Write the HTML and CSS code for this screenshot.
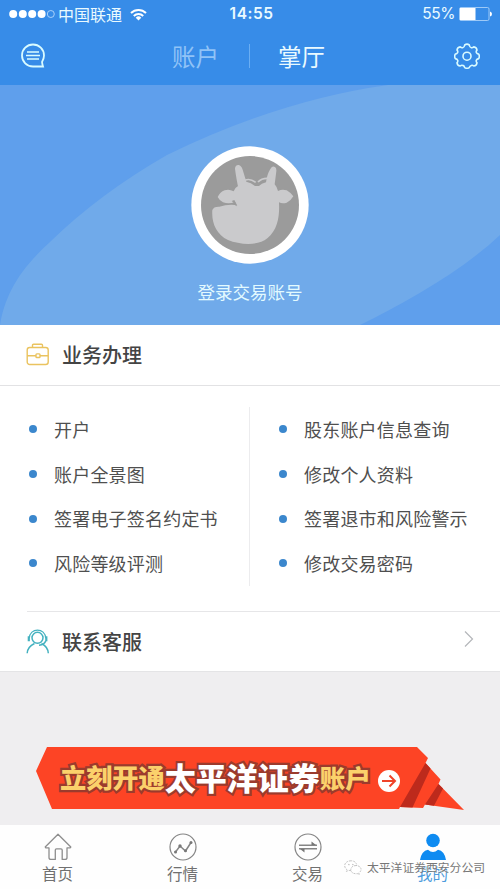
FILE: index.html
```html
<!DOCTYPE html>
<html lang="zh-CN">
<head>
<meta charset="utf-8">
<meta name="viewport" content="width=device-width, initial-scale=1">
<title>掌厅</title>
<link rel="stylesheet" href="styles.css">
</head>
<body>
<div class="app">
  <header class="top">
    <div class="status">
      <div class="carrier">
        <svg width="46" height="10" viewBox="0 0 46 10" fill="#fff"><circle cx="4.2" cy="5" r="4"/><circle cx="13.8" cy="5" r="4"/><circle cx="23.2" cy="5" r="4"/><circle cx="32.6" cy="5" r="4"/><circle cx="41.8" cy="5" r="3.5" fill="none" stroke="#b5d8fb" stroke-width=".9"/></svg>
        <span class="carrier-name">中国联通</span>
        <svg width="17" height="13" viewBox="0 0 17 13" fill="none" stroke="#fff" stroke-width="2"><path d="M1 5a10.6 10.6 0 0 1 15 0M3.800 8a6.600 6.600 0 0 1 9.400 0"/><path d="M8.500 12.500 5.700 9.700a4 4 0 0 1 5.600 0z" fill="#fff" stroke="none"/></svg>
      </div>
      <div class="clock">14:55</div>
      <div class="power">
        <span>55%</span>
        <svg width="33" height="14" viewBox="0 0 33 14"><rect x=".5" y=".5" width="29.500" height="13" rx="1.500" fill="none" stroke="#a9d0f8" stroke-width=".9"/><rect x="1" y="1" width="15.500" height="12" fill="#fff"/><path d="M31 4.500q2 .5 2 2.500t-2 2.500z" fill="#fff"/></svg>
      </div>
    </div>
    <nav class="nav">
      <svg class="chat" width="26" height="26" viewBox="0 0 26 26" fill="none" stroke="#d9fbff"><path d="M23 23.500H13A11 11 0 1 1 24 12.500c0 3-1 4.600-2 6.400q.3 2.600 1 4.600z" stroke-width="1.800"/><path d="M7 9h12M6 12.500h14M7 16h12" stroke-width="1.300"/></svg>
      <div class="switch"><span class="off">账户</span><i></i><span>掌厅</span></div>
      <svg class="gear" width="26" height="26" viewBox="0 0 26 26" fill="none" stroke="#d9fbff" stroke-width="1.600" stroke-linejoin="round"><path d="M10.700 2Q13 .2 15.300 2q.3 2.300 2 2.700 1.300.3 2.500-.8 2.900.4 3.200 3.200-1.200 1.300-.6 2.500.6 1.200 2.300 1.500 1.300 2.200 0 4.500-1.900.4-2.400 1.700-.4 1.200.7 2.500-.4 2.900-3.200 3.200-1.300-1.100-2.500-.6-1.500.5-2 2.200-2.300 1.400-4.600 0-.3-1.800-1.900-2.200-1.300-.5-2.600.6-2.800-.3-3.200-3.200 1.100-1.300.7-2.500-.5-1.300-2.400-1.700-1.300-2.300 0-4.500 1.700-.3 2.300-1.500.6-1.200-.6-2.500.3-2.800 3.200-3.200 1.200 1.100 2.500.8 1.700-.4 2-2.700z"/><circle cx="13" cy="13.200" r="4"/></svg>
    </nav>
  </header>

  <section class="hero">
    <svg class="hero-bg" width="500" height="240" viewBox="0 0 500 240"><path d="M0 240C5 211 18 186 50 157Q99 109 167 70Q280 15 388 0H500V150C462 186 405 218 360 240z" fill="#70aaea"/></svg>
    <svg class="avatar" width="118" height="118" viewBox="63 48 354 354">
      <circle cx="240" cy="225" r="176" fill="#fff"/><circle cx="240" cy="225" r="147" fill="#9b9b9b"/>
      <path fill="#cacacc" d="M207 183Q198 142 195 116Q196 104 206 105Q214 107 218 119L229 155Q243 158 255 168H267Q274 160 288 157Q291 133 301 117Q307 107 315 111Q320 114 319 124L314 163Q322 172 324 183Q336 177 350 181Q361 187 370 199Q363 212 350 218Q337 222 327 217C329 257 324 298 292 325C265 348 211 345 174 330C139 313 124 279 127 240Q131 229 148 230Q171 223 194 225L201 229L195 215Q178 224 159 217Q148 211 143 201Q150 186 164 181Q177 176 191 184Q196 172 207 166z"/>
      <path d="M225 151q14-7 32 6M264 156q11-12 30-11" fill="none" stroke="#cacacc" stroke-width="5"/>
      <path d="M185 213l17 14-9-17z" fill="#9b9b9b"/>
    </svg>
    <div class="login">登录交易账号</div>
  </section>

  <section class="head">
    <svg width="24" height="24" viewBox="0 0 24 24" fill="none" stroke="#eac35f" stroke-width="1.400"><rect x="1.200" y="4.500" width="21" height="17" rx="2.500"/><path d="M6.500 4.500V2.200q0-1 1-1h8q1 0 1 1v2.300M1.200 12.700H10m4 0h8.200"/><rect x="10" y="10.900" width="4" height="3.600" rx=".8"/></svg>
    <h2>业务办理</h2>
  </section>
  <section class="services">
    <ul>
      <li>开户</li><li>账户全景图</li><li>签署电子签名约定书</li><li>风险等级评测</li>
    </ul>
    <ul>
      <li>股东账户信息查询</li><li>修改个人资料</li><li>签署退市和风险警示</li><li>修改交易密码</li>
    </ul>
  </section>
  <section class="head contact">
    <svg width="24" height="26" viewBox="0 0 24 26" fill="none" stroke="#45b2c0" stroke-width="1.500"><circle cx="11.500" cy="8.800" r="5.500"/><path d="M3.300 9.300C3.500-1.700 19.500-1.700 19.700 9.300" stroke-width="1.200"/><path d="M2.800 7.300v5M20.300 7.300v5" stroke-width="2.200"/><path d="M1.200 24.300q.3-6.500 7.300-9.800M22.300 24.300q-.3-6.500-6.800-9.800M19.800 11.800q-1.300 4-6.800 4.500"/></svg>
    <h2>联系客服</h2>
    <svg class="chevron" width="10" height="18" viewBox="0 0 10 18" fill="none" stroke="#b4b6ba" stroke-width="1.200"><path d="M1 1.500 8.500 9 1 16.500"/></svg>
  </section>

  <section class="promo">
    <div class="banner">
      <svg class="ribbon" width="428" height="64" viewBox="0 0 428 64"><path d="M11 0H381L392 11 389.500 16 404.500 32.500 402.500 37 428 63 389 57.500 387 61 364 60 363 62H16L0 24z" fill="#fd4425"/><path d="M389.500 16 394.500 21.500 376.500 60.500 364 60zM402.500 37 407 41.500 398 58.800 389 57.500z" fill="#bd2a1c"/></svg>
      <div class="slogan"><span class="gold">立刻开通</span><span class="white">太平洋证券</span><span class="gold last">账户</span></div>
      <svg class="go" width="22" height="22" viewBox="0 0 22 22"><circle cx="11" cy="11" r="11" fill="#fff"/><path d="M4 11h13M11.500 5.500 17 11l-5.500 5.500" fill="none" stroke="#ef4329" stroke-width="2"/></svg>
    </div>
  </section>

  <footer class="tabs">
    <div class="tab"><svg width="28" height="28" viewBox="0 0 28 28" fill="none" stroke="#8e8e8e" stroke-width="1.300" stroke-linejoin="round"><path d="M1.200 14 14 1.200 26.800 14l-.7.9H23v9.500q0 2-2 2h-2.800V17q0-1.200-1.200-1.200h-4.500q-1.200 0-1.200 1.200v9.400H7q-2 0-2-2v-9.500H1.800z"/></svg><span>首页</span></div>
    <div class="tab"><svg width="28" height="28" viewBox="0 0 28 28" fill="none" stroke="#858585" stroke-width="1.200"><circle cx="14" cy="14" r="13"/><path d="m6.500 19 4.500-6 5.500 5L22 9.500" stroke-width="1.500"/><g fill="#777" stroke="none"><circle cx="6.500" cy="19" r="1.500"/><circle cx="11" cy="13" r="1.700"/><circle cx="16.500" cy="17.800" r="1.500"/><circle cx="22" cy="9.500" r="1.500"/></g></svg><span>行情</span></div>
    <div class="tab"><svg width="28" height="28" viewBox="0 0 28 28" fill="none" stroke="#858585" stroke-width="1.200"><circle cx="14" cy="14" r="13"/><path d="M5 12.200h18M5 15.800h18" stroke-width="1.500"/><path d="M17.500 12V8.500L22 12zM10.500 16v3.500L6 16z" fill="#777" stroke="none"/></svg><span>交易</span></div>
    <div class="tab active"><svg width="28" height="28" viewBox="0 0 28 28" fill="#0e8bf1"><circle cx="14" cy="7.500" r="6.800"/><path d="M1 27q1.500-9 8-10.200 5 4.500 10 0Q25.500 18 27 27z"/></svg><span>我的</span></div>
    <div class="watermark">
      <svg width="18" height="15" viewBox="0 0 18 15" fill="#fff" stroke="#aaa" stroke-width=".7" stroke-dasharray="2 1"><path d="M7 .8C3.300.8.7 3 .7 5.700c0 1.500.8 2.900 2.100 3.800l-.5 2 2.300-1.200q6 1.300 8.500-3.500Q12.500.8 7 .8z"/><path d="M12 5.500c-3 0-5.200 1.900-5.200 4.200s2.500 4.600 6.500 3.900l2 1-.5-1.700C19.200 10 16.500 5.500 12 5.500z"/><circle cx="5" cy="4.500" r=".5"/><circle cx="9" cy="4.500" r=".5"/></svg>
      <span>太平洋证券西安分公司</span>
    </div>
  </footer>
</div>
</body>
</html>
```
FILE: styles.css
```css
* { box-sizing: border-box; }
body { margin: 0; font-family: "Noto Sans CJK SC", sans-serif; color: #4f4f4f; background: #fff; }
svg { display: block; flex: none; }
.app { width: 500px; height: 889px; overflow: hidden; display: flex; flex-direction: column; }

.top { height: 85px; flex: none; background: #378ce8; color: #eafaff; }
.status { height: 28px; display: grid; grid-template-columns: 1fr 60px 1fr; align-items: center; padding: 0 8px 0 9px; }
.carrier { display: flex; align-items: center; }
.carrier-name { font-size: 16px; line-height: 26px; margin: -1px 8px 0 3px; }
.clock { font: 600 15.5px/28px Inter, sans-serif; text-align: center; letter-spacing: .5px; padding-left: 2px; }
.power { display: flex; align-items: center; justify-content: flex-end; gap: 4px; font: 15.5px/28px Inter, sans-serif; letter-spacing: -.4px; }
.nav { height: 57px; display: grid; grid-template-columns: 1fr 154px 1fr; align-items: center; padding: 0 20px 1px; }
.switch { display: flex; align-items: center; font-size: 23.5px; line-height: 56px; }
.switch span { white-space: nowrap; }
.switch .off { color: #90c3f7; margin-left: -1px; }
.switch i { width: 1px; height: 24px; margin: 0 28px 0 30px; background: #6aaef3; }
.gear { justify-self: end; }

.hero { height: 240px; flex: none; position: relative; background: #5f9fec; display: flex; flex-direction: column; align-items: center; padding-top: 61px; }
.hero-bg { position: absolute; inset: 0; }
.avatar, .login { position: relative; }
.login { margin-top: 15px; font-size: 17.5px; line-height: 26px; color: #e3faff; }

.head { height: 60px; flex: none; display: flex; align-items: center; padding-left: 26px; gap: 12px; }
h2 { margin: 0; font-size: 20px; line-height: 30px; font-weight: 500; color: #444; }
.services { height: 227px; flex: none; border-top: 1px solid #e2e2e4; display: grid; grid-template-columns: 249px 251px; position: relative; padding: 21px 0 27px; }
.services::after { content: ""; position: absolute; left: 27px; right: 0; bottom: 0; height: 1px; background: #e6e6e8; }
ul { list-style: none; margin: 0; padding: 0; }
ul + ul { border-left: 1px solid #ececee; }
li { height: 44.7px; display: flex; align-items: center; gap: 17px; padding-left: 29px; font-size: 18px; line-height: 27px; letter-spacing: .2px; white-space: nowrap; }
li::before { content: ""; width: 8px; height: 8px; border-radius: 50%; background: #3b87cd; }
.contact { height: 59px; }
.chevron { margin: -5px 26px 0 auto; }

.promo { height: 154px; flex: none; background: #efeef0; border-top: 1px solid #e4e4e6; padding: 75px 0 0 36px; }
.banner { position: relative; width: 428px; height: 64px; display: flex; align-items: center; padding-left: 24px; }
.ribbon { position: absolute; inset: 0; }
.slogan { position: relative; display: flex; align-items: center; height: 62px; width: 312px; white-space: nowrap; font-weight: 900; margin-top: -4px; }
.slogan span { -webkit-text-stroke: 4.5px #9b3b2d; paint-order: stroke fill; }
.gold { color: #fbd16b; font-size: 26.2px; line-height: 40px; }
.white { color: #fff; font-size: 31px; line-height: 44px; }
.slogan .last { font-size: 25.5px; }
.go { position: relative; margin: 3px 0 0 6px; }

.tabs { position: relative; height: 64px; flex: none; background: #fefefe; display: grid; grid-template-columns: repeat(4, 125px); margin-left: -5px; width: 505px; }
.tab { display: flex; flex-direction: column; align-items: center; padding-top: 8px; font-size: 15.5px; color: #707070; }
.tab span { line-height: 24px; }
.active { color: #4d9bdc; }
.watermark { position: absolute; left: 349px; top: 33px; display: flex; align-items: center; gap: 5px; font-size: 11.8px; line-height: 18px; color: #777; white-space: nowrap; text-shadow: -1px -1px 0 #fff; }
```
